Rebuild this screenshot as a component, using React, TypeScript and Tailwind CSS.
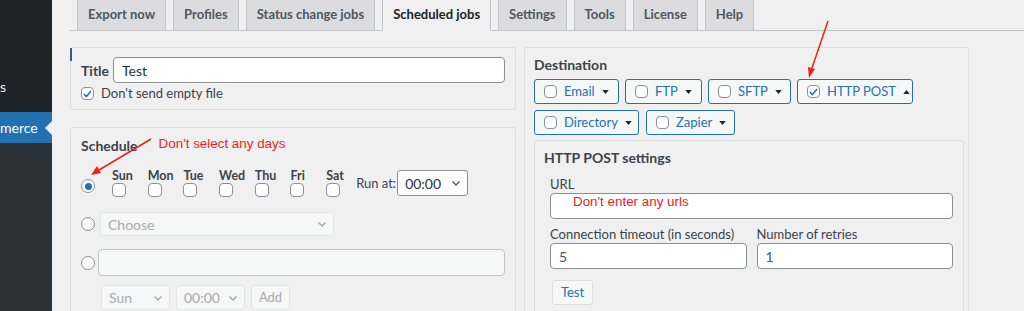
import React from 'react';

const tabs = ['Export now', 'Profiles', 'Status change jobs', 'Scheduled jobs', 'Settings', 'Tools', 'License', 'Help'];
const days = ['Sun', 'Mon', 'Tue', 'Wed', 'Thu', 'Fri', 'Sat'];

const Check: React.FC<{ checked?: boolean; className?: string }> = ({ checked, className = '' }) => (
  <span
    className={`inline-flex items-center justify-center w-[14px] h-[14px] rounded-[4px] border border-[#8c8f94] bg-white shrink-0 ${className}`}
  >
    {checked && (
      <svg viewBox="0 0 14 14" className="w-[12px] h-[12px]">
        <path d="M2.5 7.2 L5.6 10.2 L11.5 3.2" fill="none" stroke="#2271b1" strokeWidth="2" />
      </svg>
    )}
  </span>
);

const Radio: React.FC<{ checked?: boolean; className?: string }> = ({ checked, className = '' }) => (
  <span
    className={`inline-flex items-center justify-center w-[14px] h-[14px] rounded-full border border-[#8c8f94] bg-white shrink-0 ${className}`}
  >
    {checked && <span className="w-[7px] h-[7px] rounded-full bg-[#2271b1]" />}
  </span>
);

const Chevron: React.FC<{ color?: string }> = ({ color = '#50575e' }) => (
  <svg viewBox="0 0 12 12" className="w-[12px] h-[12px]">
    <path d="M2.5 4.5 L6 8 L9.5 4.5" fill="none" stroke={color} strokeWidth="1.5" />
  </svg>
);

const Caret: React.FC<{ up?: boolean }> = ({ up }) => (
  <svg viewBox="0 0 8 5" className="w-[7px] h-[4px]">
    <path d={up ? 'M0 5 L4 0 L8 5 Z' : 'M0 0 L8 0 L4 5 Z'} fill="#1d2327" />
  </svg>
);

const DestButton: React.FC<{ label: string; w: string; checked?: boolean; up?: boolean }> = ({ label, w, checked, up }) => (
  <div
    className={`${w} h-[25px] flex items-center pl-[9px] border border-[#2271b1] rounded-[3px] bg-[#f6f7f7] text-[13px] text-[#2271b1]`}
  >
    <Check checked={checked} className="!w-[13px] !h-[13px]" />
    <span className="ml-[7px]">{label}</span>
    <span className="ml-[7px] flex items-center">
      <Caret up={up} />
    </span>
  </div>
);

export default function App() {
  return (
    <div className="relative w-[1024px] h-[311px] overflow-hidden bg-[#f0f0f0] flex font-['Lato','Noto_Sans',sans-serif] text-[#3c434a]">
      {/* admin sidebar */}
      <div className="w-[52px] shrink-0 flex flex-col bg-[#1d2327] text-[#f0f0f1] text-[14px]">
        <div className="h-[75px]" />
        <div className="h-[24px] leading-[24px]">s</div>
        <div className="h-[13px]" />
        <div className="relative h-[31px] bg-[#2271b1] leading-[31px] text-white overflow-hidden">
          merce
          <span className="absolute right-0 top-[9px] w-0 h-0 border-y-[7px] border-y-transparent border-r-[7px] border-r-[#f0f0f0]" />
        </div>
        <div className="flex-1 bg-[#2c3338]" />
      </div>

      {/* main */}
      <div className="flex-1 pl-[18px]">
        <div className="h-[31px] flex items-end border-b border-[#c3c4c7] pl-[7px] w-[1006px]">
          {tabs.map((t) => {
            const active = t === 'Scheduled jobs';
            return (
              <div
                key={t}
                className={`h-[31px] mr-[7px] px-[10px] flex items-center text-[13px] font-bold border-x border-[#c3c4c7] -mb-px ${
                  active ? 'bg-[#f0f0f0] text-[#1d2327] border-b border-b-[#f0f0f0]' : 'bg-[#dcdcde] text-[#50575e] border-b border-b-[#c3c4c7]'
                }`}
              >
                {t}
              </div>
            );
          })}
        </div>

        <div className="flex gap-[8px] mt-[16px]">
          {/* left column */}
          <div className="w-[446px] flex flex-col gap-[17px]">
            <div className="relative h-[63px] border border-[#dcdcde] rounded-[3px] px-[10px] pt-[9px]">
              <span className="absolute left-[-1px] top-0 w-[2px] h-[13px] bg-[#3c5a82]" />
              <div className="flex items-center gap-[4px]">
                <span className="text-[14px] font-bold">Title</span>
                <div className="flex-1 h-[26px] bg-white border border-[#8c8f94] rounded-[4px] flex items-center px-[8px] text-[14px] text-[#2c3338]">
                  Test
                </div>
              </div>
              <div className="flex items-center mt-[1px] text-[13px]">
                <Check checked className="!w-[13px] !h-[13px]" />
                <span className="ml-[7px]">Don't send empty file</span>
              </div>
            </div>

            <div className="h-[200px] border border-[#dcdcde] rounded-[3px] px-[10px] pt-[8px]">
              <div className="flex items-center h-[18px]">
                <span className="text-[14px] font-bold">Schedule</span>
                <span className="ml-[21px] -mt-[2px] text-[13.4px] text-[#f01e1e] font-['Liberation_Sans',Arial,sans-serif]">
                  Don't select any days
                </span>
              </div>

              <div className="flex items-start mt-[15px]">
                <Radio checked className="mt-[10px]" />
                <div className="flex ml-[17px]">
                  {days.map((d, i) => (
                    <div key={d} className={`flex flex-col items-start ${i < 6 ? 'w-[35.7px]' : 'w-[30px]'}`}>
                      <span className="text-[12.5px] font-bold leading-[14px]">{d}</span>
                      <Check />
                    </div>
                  ))}
                </div>
                <span className="text-[13px] leading-[16px] mt-[6px]">Run at:</span>
                <div className="ml-[1px] mt-[1px] w-[71px] h-[26px] bg-white border border-[#8c8f94] rounded-[3px] flex items-center justify-between pl-[7px] pr-[5px] text-[14px] text-[#2c3338]">
                  00:00
                  <Chevron />
                </div>
              </div>

              <div className="flex items-center mt-[15px]">
                <Radio />
                <div className="ml-[5px] w-[234px] h-[24px] bg-[#f6f7f7] border border-[#e4e4e6] rounded-[3px] flex items-center justify-between pl-[7px] pr-[5px] text-[14px] text-[#a7aaad]">
                  Choose
                  <Chevron color="#a7aaad" />
                </div>
              </div>

              <div className="flex items-center mt-[13px]">
                <Radio />
                <div className="ml-[3px] flex-1 h-[27px] bg-[#f6f7f7] border border-[#c3c4c7] rounded-[4px]" />
              </div>

              <div className="flex items-center gap-[6px] mt-[9px] ml-[20px] text-[14px] text-[#a7aaad]">
                <div className="w-[69px] h-[25px] bg-[#f6f7f7] border border-[#e4e4e6] rounded-[3px] flex items-center justify-between pl-[7px] pr-[5px]">
                  Sun
                  <Chevron color="#a7aaad" />
                </div>
                <div className="w-[69px] h-[25px] bg-[#f6f7f7] border border-[#e4e4e6] rounded-[3px] flex items-center justify-between pl-[7px] pr-[5px]">
                  00:00
                  <Chevron color="#a7aaad" />
                </div>
                <div className="w-[39px] h-[25px] bg-[#f6f7f7] border border-[#e4e4e6] rounded-[3px] flex items-center justify-center text-[13px]">
                  Add
                </div>
              </div>
            </div>
          </div>

          {/* right column */}
          <div className="w-[445px] h-[280px] border border-[#dcdcde] rounded-[3px] px-[9px] pt-[8px]">
            <div className="text-[14px] font-bold h-[18px] leading-[18px]">Destination</div>
            <div className="flex gap-[6px] mt-[5px]">
              <DestButton label="Email" w="w-[85px]" />
              <DestButton label="FTP" w="w-[77px]" />
              <DestButton label="SFTP" w="w-[83px]" />
              <DestButton label="HTTP POST" w="w-[116px]" checked up />
            </div>
            <div className="flex gap-[7px] mt-[6px]">
              <DestButton label="Directory" w="w-[105px]" />
              <DestButton label="Zapier" w="w-[89px]" />
            </div>

            <div className="mt-[5px] w-[430px] h-[200px] border border-[#dcdcde] rounded-[3px] px-[9px] pt-[8px]">
              <div className="text-[14px] font-bold h-[18px] leading-[18px]">HTTP POST settings</div>
              <div className="pl-[6px] pr-[1px]">
                <div className="mt-[9px] text-[13px] leading-[16px]">URL</div>
                <div className="mt-[1px] h-[26px] bg-white border border-[#8c8f94] rounded-[4px] px-[22px] pt-[1px] leading-[14px] text-[13.4px] text-[#f01e1e] font-['Liberation_Sans',Arial,sans-serif]">
                  Don't enter any urls
                </div>
                <div className="flex gap-[10px] mt-[7px]">
                  <div className="flex-1">
                    <div className="text-[13px] leading-[16px]">Connection timeout (in seconds)</div>
                    <div className="mt-[1px] h-[26px] bg-white border border-[#8c8f94] rounded-[4px] px-[8px] flex items-center text-[14px] text-[#50575e]">
                      5
                    </div>
                  </div>
                  <div className="flex-1">
                    <div className="text-[13px] leading-[16px]">Number of retries</div>
                    <div className="mt-[1px] h-[26px] bg-white border border-[#8c8f94] rounded-[4px] px-[8px] flex items-center text-[14px] text-[#50575e]">
                      1
                    </div>
                  </div>
                </div>
                <div className="mt-[11px] ml-[2px] w-[41px] h-[25px] bg-[#f6f7f7] border border-[#dcdcde] rounded-[3px] flex items-center justify-center text-[13px] text-[#2271b1]">
                  Test
                </div>
              </div>
            </div>
          </div>
        </div>
      </div>

      {/* annotation arrows */}
      <svg className="absolute inset-0 pointer-events-none" width="1024" height="311" viewBox="0 0 1024 311">
        <line x1="151" y1="139" x2="99" y2="170" stroke="#f01e1e" strokeWidth="1.5" />
        <path d="M91 175 L97 166 L101 173 Z" fill="#f01e1e" />
        <line x1="828" y1="21" x2="812" y2="68" stroke="#f01e1e" strokeWidth="1.5" />
        <path d="M809 78 L808 67 L815 69 Z" fill="#f01e1e" />
      </svg>
    </div>
  );
}
